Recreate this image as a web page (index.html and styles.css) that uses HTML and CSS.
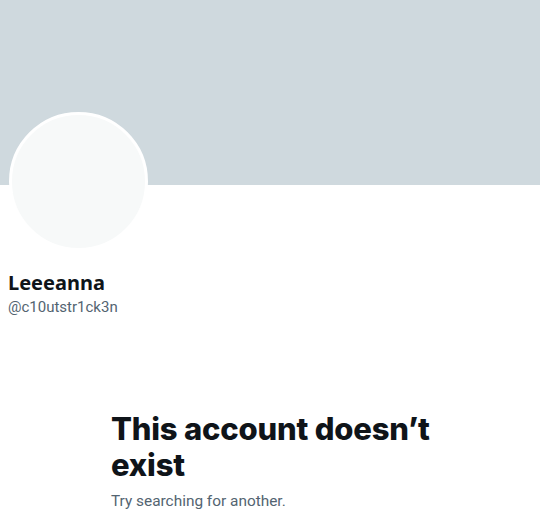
FILE: index.html
```html
<!DOCTYPE html>
<html>
<head>
<meta charset="utf-8">
<link rel="stylesheet" href="styles.css">
</head>
<body>
<div class="page">
  <div class="banner"></div>
  <div class="profile">
    <div class="avatar"></div>
    <div class="name">Leeeanna</div>
    <div class="handle">@c10utstr1ck3n</div>
  </div>
  <div class="empty">
    <h1 class="title">This account doesn’t exist</h1>
    <p class="sub">Try searching for another.</p>
  </div>
</div>
</body>
</html>
```
FILE: styles.css
```css
html, body {
  margin: 0;
  padding: 0;
  background: #fff;
}
.page {
  width: 540px;
  font-family: "Noto Sans", "Liberation Sans", sans-serif;
  color: #0f1419;
}
.banner {
  height: 185px;
  background: #cfd9de;
}
.profile {
  padding: 0 8px;
}
.avatar {
  width: 133px;
  height: 133px;
  margin-top: -73px;
  margin-left: 1px;
  border-radius: 50%;
  border: 3.5px solid #fff;
  background: #f7f9f9;
}
.name {
  margin-top: 20px;
  font-size: 20px;
  line-height: 24px;
  font-weight: 700;
}
.handle {
  margin-top: 2px;
  font-size: 15px;
  line-height: 20px;
  color: #536471;
  font-family: Roboto, "Noto Sans", sans-serif;
}
.empty {
  margin: 94px 0 0 111px;
  width: 340px;
}
.title {
  margin: 0;
  font-size: 31px;
  line-height: 36px;
  font-weight: 800;
  font-family: Inter, "Noto Sans", sans-serif;
  letter-spacing: -0.2px;
}
.sub {
  margin: 8px 0 0;
  font-size: 15.4px;
  line-height: 20px;
  color: #536471;
  font-family: Roboto, "Noto Sans", sans-serif;
}
```
